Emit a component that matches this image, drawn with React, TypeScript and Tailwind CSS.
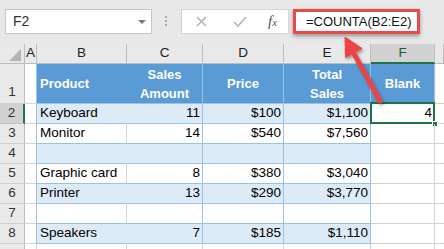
import React from 'react'

type Row = {
  n: number
  fill: boolean
  b?: string
  c?: string
  d?: string
  e?: string
}

const rows: Row[] = [
  { n: 2, fill: true, b: 'Keyboard', c: '11', d: '$100', e: '$1,100' },
  { n: 3, fill: false, b: 'Monitor', c: '14', d: '$540', e: '$7,560' },
  { n: 4, fill: true },
  { n: 5, fill: false, b: 'Graphic card', c: '8', d: '$380', e: '$3,040' },
  { n: 6, fill: true, b: 'Printer', c: '13', d: '$290', e: '$3,770' },
  { n: 7, fill: false },
  { n: 8, fill: true, b: 'Speakers', c: '7', d: '$185', e: '$1,110' },
]

const cols = ['A', 'B', 'C', 'D', 'E', 'F', '']

export default function App() {
  return (
    <div className="relative w-[444px] h-[249px] overflow-hidden bg-white font-['Liberation_Sans',Arial,sans-serif] text-black">
      {/* Formula bar */}
      <div className="h-[44px] bg-[#e8e8e8] flex items-start pt-[9px]">
        <div className="ml-[5px] w-[147px] h-[25px] bg-white border border-[#c6c6c6] flex items-center pl-[7px] pr-[5px] text-[14px] text-[#333]">
          <span className="flex-1">F2</span>
          <svg width="8" height="4" viewBox="0 0 8 4">
            <path d="M0 0h8L4 4z" fill="#7a7a7a" />
          </svg>
        </div>
        <div className="ml-[13px] mt-[7px] flex flex-col gap-[2px]">
          <div className="w-[2px] h-[2px] bg-[#a8a8a8]" />
          <div className="w-[2px] h-[2px] bg-[#a8a8a8]" />
          <div className="w-[2px] h-[2px] bg-[#a8a8a8]" />
        </div>
        <div className="ml-[14px] w-[108px] h-[25px] bg-white border border-[#d4d4d4] flex items-center">
          <svg className="ml-[14px]" width="11" height="11" viewBox="0 0 11 11">
            <path d="M1 1l9 9M10 1l-9 9" stroke="#b5b5b5" strokeWidth="1.6" />
          </svg>
          <svg className="ml-[26px]" width="14" height="11" viewBox="0 0 14 11">
            <path d="M1 6l4 4L13 1" stroke="#b5b5b5" strokeWidth="1.6" fill="none" />
          </svg>
          <span className="ml-[21px] font-['Liberation_Serif',serif] italic text-[15px] text-[#555] leading-none">
            f<span className="text-[11px]">x</span>
          </span>
        </div>
        <div className="ml-[4px] w-[127px] h-[25px] bg-white border-[3px] border-[#e84a4a] shadow-[0_2px_4px_rgba(0,0,0,0.35)] flex items-center pl-[10px] text-[13px] text-[#111]">
          =COUNTA(B2:E2)
        </div>
      </div>

      {/* Sheet */}
      <div className="grid grid-cols-[25px_12px_90px_76px_81px_87px_64px_1fr] grid-rows-[20px_40px_repeat(8,20px)] text-[13.5px]">
        {/* column headers */}
        <div className="relative bg-[#e9e9e9] border-r border-b border-[#bdbdbd]">
          <svg className="absolute right-[3px] bottom-[2px]" width="12" height="12" viewBox="0 0 12 12">
            <path d="M12 0V12H0z" fill="#b4b4b4" />
          </svg>
        </div>
        {cols.map((c, i) =>
          c === 'F' ? (
            <div
              key={i}
              className="bg-[#d2d2d2] border-r border-[#bdbdbd] border-b-2 border-b-[#217346] flex items-center justify-center text-[#1e5e3a]"
            >
              {c}
            </div>
          ) : (
            <div
              key={i}
              className="bg-[#e9e9e9] border-r border-b border-[#bdbdbd] flex items-center justify-center text-[#222]"
            >
              {c}
            </div>
          )
        )}

        {/* row 1 */}
        <div className="bg-[#e9e9e9] border-r border-b border-r-[#bdbdbd] border-b-[#d0d0d0] flex items-end justify-center pb-[1px] text-[#333]">
          1
        </div>
        <div className="border-r border-b border-r-[#9bc2e6] border-b-[#d4d4d4]" />
        <div className="bg-[#5b9bd5] border-b border-[#9bc2e6] flex items-center pl-[3px] text-white font-bold text-[13px]">
          Product
        </div>
        <div className="bg-[#5b9bd5] border-r border-b border-[#9bc2e6] flex flex-col items-center justify-center text-white font-bold text-[13px] leading-[19px]">
          <span>Sales</span>
          <span>Amount</span>
        </div>
        <div className="bg-[#5b9bd5] border-r border-b border-[#9bc2e6] flex items-center justify-center text-white font-bold text-[13px]">
          Price
        </div>
        <div className="bg-[#5b9bd5] border-r border-b border-[#9bc2e6] flex flex-col items-center justify-center text-white font-bold text-[13px] leading-[19px]">
          <span>Total</span>
          <span>Sales</span>
        </div>
        <div className="bg-[#5b9bd5] border-r border-b border-[#9bc2e6] flex items-center justify-center text-white font-bold text-[13px]">
          Blank
        </div>
        <div className="border-b border-[#d4d4d4]" />

        {/* data rows */}
        {rows.map((r) => (
          <React.Fragment key={r.n}>
            {r.n === 2 ? (
              <div className="bg-[#d2d2d2] border-r-2 border-b border-r-[#217346] border-b-[#c4c4c4] flex items-center justify-center text-[#333]">
                {r.n}
              </div>
            ) : (
              <div className="bg-[#e9e9e9] border-r border-b border-r-[#bdbdbd] border-b-[#d0d0d0] flex items-center justify-center text-[#333]">
                {r.n}
              </div>
            )}
            <div className="border-r border-b border-r-[#9bc2e6] border-b-[#d4d4d4]" />
            <div
              className={
                r.fill
                  ? 'bg-[#ddebf7] border-r border-b border-r-[#ddebf7] border-b-[#9bc2e6] flex items-center pl-[3px]'
                  : 'bg-white border-r border-b border-r-[#d4d4d4] border-b-[#9bc2e6] flex items-center pl-[3px]'
              }
            >
              {r.b}
            </div>
            {[r.c, r.d, r.e].map((v, i) => (
              <div
                key={i}
                className={
                  r.fill
                    ? 'bg-[#ddebf7] border-r border-b border-[#9bc2e6] flex items-center justify-end pr-[2px]'
                    : 'bg-white border-r border-b border-[#9bc2e6] flex items-center justify-end pr-[2px]'
                }
              >
                {v}
              </div>
            ))}
            <div className="relative border-r border-b border-[#d4d4d4] flex items-center justify-end pr-[2px]">
              {r.n === 2 && (
                <>
                  4
                  <div className="absolute -left-px -top-[2px] -right-px -bottom-px border-2 border-[#217346]" />
                  <div className="absolute -right-[4px] -bottom-[4px] w-[6px] h-[6px] bg-[#217346] border border-white" />
                </>
              )}
            </div>
            <div className="border-b border-[#d4d4d4]" />
          </React.Fragment>
        ))}

        {/* row 9, cut off by the window */}
        <div className="bg-[#e9e9e9] border-r border-r-[#bdbdbd]" />
        <div className="border-r border-[#d4d4d4]" />
        <div className="border-r border-[#d4d4d4]" />
        <div className="border-r border-[#d4d4d4]" />
        <div className="border-r border-[#d4d4d4]" />
        <div className="border-r border-[#d4d4d4]" />
        <div className="border-r border-[#d4d4d4]" />
        <div />
      </div>

      {/* red arrow pointing at the formula */}
      <svg className="absolute left-0 top-0 pointer-events-none" width="444" height="249" viewBox="0 0 444 249">
        <defs>
          <filter id="sh" x="-50%" y="-50%" width="200%" height="200%">
            <feDropShadow dx="1.5" dy="2" stdDeviation="1.5" floodColor="#000" floodOpacity="0.35" />
          </filter>
        </defs>
        <g filter="url(#sh)" fill="#ea4545" stroke="#ea4545">
          <path d="M380 101L352 50" strokeWidth="5" strokeLinecap="round" fill="none" />
          <path d="M345 37L362 48.5L345.5 57.5z" strokeWidth="1" strokeLinejoin="round" />
        </g>
      </svg>
    </div>
  )
}
